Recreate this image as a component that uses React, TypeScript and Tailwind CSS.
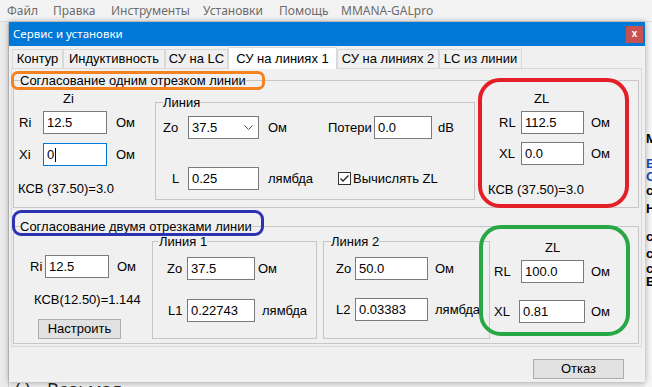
import type { ReactNode } from "react";

const cx = (...c: (string | false | undefined)[]) => c.filter(Boolean).join(" ");

function Field({
  value,
  className,
  focused,
}: {
  value: string;
  className?: string;
  focused?: boolean;
}) {
  return (
    <div
      className={cx(
        "flex h-[23px] shrink-0 items-center border bg-white pl-[3px] text-[13px]",
        focused ? "border-[#0078d7]" : "border-[#7a7a7a]",
        className,
      )}
    >
      {value}
      {focused && <span className="ml-px h-[14px] w-px bg-black" />}
    </div>
  );
}

function Group({
  title,
  className,
  legendClass,
  children,
}: {
  title: string;
  className?: string;
  legendClass?: string;
  children: ReactNode;
}) {
  return (
    <fieldset className={cx("shrink-0 border border-[#c6c6c6]", className)}>
      <legend className={cx("text-[13px] leading-[15px]", legendClass)}>{title}</legend>
      {children}
    </fieldset>
  );
}

function Tab({ label, w, active }: { label: string; w: string; active?: boolean }) {
  return (
    <div
      className={cx(
        "flex shrink-0 items-center justify-center border border-b-0 border-[#d9d9d9] text-[13px]",
        w,
        active ? "relative z-10 -mb-px h-[22px] bg-white" : "h-[19px] bg-[#f0f0f0]",
      )}
    >
      {label}
    </div>
  );
}

function Dialog() {
  return (
    <div className="flex h-[360px] shrink-0 flex-col bg-[#f0f0f0] font-['Liberation_Sans',Arial,sans-serif] shadow-[0_0_6px_rgba(0,0,0,0.35)]">
      {/* title bar */}
      <div className="flex h-[24px] shrink-0 items-center justify-between bg-[#0078d7] pl-[4px] pr-[2px]">
        <span className="font-['Noto_Sans',sans-serif] text-[11.5px] text-white">Сервис и установки</span>
        <div className="flex h-[17px] w-[17px] items-center justify-center bg-[#c75050] pb-px text-[10px] font-bold text-white">
          x
        </div>
      </div>

      {/* tabs */}
      <div className="flex h-[22px] shrink-0 items-end pl-[3px]">
        <Tab label="Контур" w="w-[51px]" />
        <Tab label="Индуктивность" w="w-[102px]" />
        <Tab label="СУ на LC" w="w-[63px]" />
        <Tab label="СУ на линиях 1" w="w-[109px]" active />
        <Tab label="СУ на линиях 2" w="w-[102px]" />
        <Tab label="LC из линии" w="w-[83px]" />
      </div>

      {/* tab page */}
      <div className="ml-[2px] mr-[3px] flex h-[279px] shrink-0 flex-col border border-[#d9d9d9] bg-[#f0f0f0] pl-px pr-[2px] pt-[4px]">
        {/* one segment */}
        <Group title="Согласование одним отрезком линии" className="h-[135px]" legendClass="ml-[6px]">
          <div className="flex items-start">
            <div className="flex w-[141px] shrink-0 flex-col pl-[5px] text-[13px]">
              <div className="mt-[3px] pl-[44px] leading-[15px]">Zi</div>
              <div className="mt-[5px] flex items-center">
                <span className="w-[24px]">Ri</span>
                <Field value="12.5" className="w-[64px]" />
                <span className="ml-[9px]">Ом</span>
              </div>
              <div className="mt-[9px] flex items-center">
                <span className="w-[24px]">Xi</span>
                <Field value="0" className="w-[64px]" focused />
                <span className="ml-[9px]">Ом</span>
              </div>
              <div className="-ml-px mt-[15px] leading-[15px]">КСВ (37.50)=3.0</div>
            </div>

            <Group title="Линия" className="mt-[7px] h-[105px] w-[320px]" legendClass="ml-[7px]">
              <div className="flex flex-col text-[13px]">
                <div className="mt-[6px] flex items-center pl-[7px]">
                  <span className="w-[25px]">Zo</span>
                  <div className="flex h-[23px] w-[71px] items-center justify-between border border-[#7a7a7a] bg-white pl-[3px] pr-[5px]">
                    37.5
                    <svg width="9" height="6" viewBox="0 0 9 6" fill="none" stroke="#555" strokeWidth="1">
                      <polyline points="0.5,0.5 4.5,4.5 8.5,0.5" />
                    </svg>
                  </div>
                  <span className="ml-[9px] w-[60px]">Ом</span>
                  <span className="w-[46px]">Потери</span>
                  <Field value="0.0" className="w-[58px]" />
                  <span className="ml-[6px]">dB</span>
                </div>
                <div className="mt-[28px] flex items-center pl-[16px]">
                  <span className="w-[16px]">L</span>
                  <Field value="0.25" className="w-[71px]" />
                  <span className="ml-[9px] w-[70px]">лямбда</span>
                  <svg width="13" height="13" viewBox="0 0 13 13" className="shrink-0">
                    <rect x="0.5" y="0.5" width="12" height="12" fill="#fff" stroke="#333" />
                    <polyline points="2.5,6.5 5,9 10.5,3.5" fill="none" stroke="#222" strokeWidth="1.3" />
                  </svg>
                  <span className="ml-[2px]">Вычислять ZL</span>
                </div>
              </div>
            </Group>

            <div className="flex flex-1 flex-col text-[13px]">
              <div className="mt-[3px] pl-[59px] leading-[15px]">ZL</div>
              <div className="mt-[5px] flex items-center pl-[24px]">
                <span className="w-[22px]">RL</span>
                <Field value="112.5" className="w-[63px]" />
                <span className="ml-[7px]">Ом</span>
              </div>
              <div className="mt-[8px] flex items-center pl-[24px]">
                <span className="w-[22px]">XL</span>
                <Field value="0.0" className="w-[63px]" />
                <span className="ml-[7px]">Ом</span>
              </div>
              <div className="mt-[17px] pl-[13px] leading-[15px]">КСВ (37.50)=3.0</div>
            </div>
          </div>
        </Group>

        {/* two segments */}
        <Group title="Согласование двумя отрезками линии" className="mt-[11px] h-[125px]" legendClass="ml-[6px]">
          <div className="flex items-start text-[13px]">
            <div className="flex w-[138px] shrink-0 flex-col">
              <div className="mt-[21px] flex items-center pl-[16px]">
                <span className="w-[15px]">Ri</span>
                <Field value="12.5" className="w-[64px]" />
                <span className="ml-[8px]">Ом</span>
              </div>
              <div className="mt-[14px] pl-[20px] leading-[15px]">КСВ(12.50)=1.144</div>
              <div className="ml-[24px] mt-[12px] flex h-[20px] w-[83px] items-center justify-center border border-[#adadad] bg-[#e1e1e1]">
                Настроить
              </div>
            </div>

            <Group title="Линия 1" className="h-[105px] w-[165px]" legendClass="ml-[6px]">
              <div className="mt-[8px] flex items-center pl-[14px]">
                <span className="w-[20px]">Zo</span>
                <Field value="37.5" className="w-[68px]" />
                <span className="ml-[3px]">Ом</span>
              </div>
              <div className="mt-[19px] flex items-center pl-[15px]">
                <span className="w-[19px]">L1</span>
                <Field value="0.22743" className="w-[68px]" />
                <span className="ml-[7px]">лямбда</span>
              </div>
            </Group>

            <Group title="Линия 2" className="ml-[6px] h-[105px] w-[167px]" legendClass="ml-[7px]">
              <div className="mt-[8px] flex items-center pl-[12px]">
                <span className="w-[19px]">Zo</span>
                <Field value="50.0" className="w-[73px]" />
                <span className="ml-[7px]">Ом</span>
              </div>
              <div className="mt-[18px] flex items-center pl-[12px]">
                <span className="w-[19px]">L2</span>
                <Field value="0.03383" className="w-[73px]" />
                <span className="ml-[7px]">лямбда</span>
              </div>
            </Group>

            <div className="flex flex-1 flex-col">
              <div className="mt-[6px] pl-[55px] leading-[15px]">ZL</div>
              <div className="mt-[5px] flex items-center pl-[4px]">
                <span className="w-[27px]">RL</span>
                <Field value="100.0" className="w-[63px]" />
                <span className="ml-[7px]">Ом</span>
              </div>
              <div className="mt-[17px] flex items-center pl-[4px]">
                <span className="w-[25px]">XL</span>
                <Field value="0.81" className="w-[66px]" />
                <span className="ml-[6px]">Ом</span>
              </div>
            </div>
          </div>
        </Group>
      </div>

      {/* footer */}
      <div className="flex justify-end pr-[21px] pt-[12px]">
        <div className="flex h-[20px] w-[91px] items-center justify-center border border-[#adadad] bg-[#e1e1e1] text-[13px]">
          Отказ
        </div>
      </div>
    </div>
  );
}

export default function App() {
  return (
    <div className="relative flex h-[387px] w-[652px] flex-col overflow-hidden bg-[#ececec] text-black">
      {/* main window menu */}
      <div className="flex h-[22px] shrink-0 items-center border-b border-[#dcdcdc] bg-[#f3f3f3] pl-[7px] font-['Noto_Sans',sans-serif] text-[12px] text-[#6b6b6b]">
        <span className="w-[46px]">Файл</span>
        <span className="w-[58px]">Правка</span>
        <span className="w-[92px]">Инструменты</span>
        <span className="w-[76px]">Установки</span>
        <span className="w-[62px]">Помощь</span>
        <span>MMANA-GALpro</span>
      </div>

      <div className="flex min-h-0 flex-1">
        <div className="w-[9px] shrink-0 border-r border-[#cfcfcf] bg-[#ebebeb]" />
        <div className="relative z-10 flex w-[636px] shrink-0 flex-col">
          <Dialog />
          <div className="h-[6px] overflow-hidden pl-[6px] font-['Noto_Sans',sans-serif] text-[18px] leading-[22px] text-[#222]">
            <div className="-mt-[4px] flex">
              <span className="w-[32px]">( )</span>
              <span>Возьмая</span>
            </div>
          </div>
        </div>
        <div className="flex w-[7px] shrink-0 flex-col overflow-hidden bg-[#f5f5f5] pl-px font-['Liberation_Sans',Arial,sans-serif] text-[13px] font-bold leading-[12px]">
          <span className="mt-[111px] h-[12px]">M</span>
          <span className="mt-[13px] h-[12px] text-[#1f4fb5]">E</span>
          <span className="mt-px h-[12px] text-[#1f4fb5]">C</span>
          <span className="mt-[2px] h-[12px]">c</span>
          <span className="mt-[6px] h-[12px]">H</span>
          <span className="mt-[16px] h-[12px]">c</span>
          <span className="mt-[5px] h-[12px]">c</span>
          <span className="mt-[3px] h-[12px]">c</span>
          <span className="mt-px h-[12px]">B</span>
        </div>
      </div>

      {/* hand-drawn annotations over the screenshot */}
      <div className="pointer-events-none absolute left-[11px] top-[71px] z-20 h-[19px] w-[254px] rounded-[7px] border-[3px] border-[#f58220]" />
      <div className="pointer-events-none absolute left-[478px] top-[78px] z-20 h-[130px] w-[151px] rounded-[22px] border-4 border-[#e31e27]" />
      <div className="pointer-events-none absolute left-[12px] top-[210px] z-20 h-[26px] w-[252px] rounded-[9px] border-[3px] border-[#2b33b0]" />
      <div className="pointer-events-none absolute left-[479px] top-[225px] z-20 h-[111px] w-[151px] rounded-[22px] border-4 border-[#28a745]" />
    </div>
  );
}
